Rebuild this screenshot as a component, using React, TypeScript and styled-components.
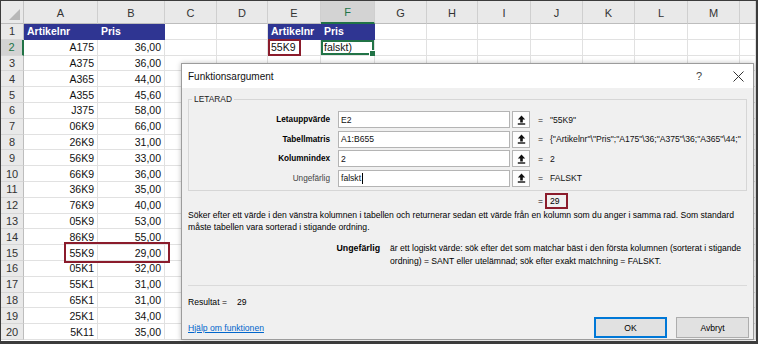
import React from 'react';
import styled, { createGlobalStyle, css } from 'styled-components';

const GlobalStyle = createGlobalStyle`
  html, body { margin: 0; padding: 0; background: #fff; }
  body { width: 758px; height: 344px; overflow: hidden; }
  * { box-sizing: border-box; }
`;

const COLS = [23, 74, 67, 52, 51, 53, 54, 52, 51, 53, 52, 52, 53, 52];
const LETTERS = ['A', 'B', 'C', 'D', 'E', 'F', 'G', 'H', 'I', 'J', 'K', 'L', 'M'];

const Frame = styled.div`
  position: relative;
  width: 758px;
  height: 344px;
  border-style: solid;
  border-color: #3c3c3c;
  border-width: 1px 2px 3px 1px;
  overflow: hidden;
  background: #fff;
`;

const Sheet = styled.div`
  display: grid;
  grid-template-columns: ${COLS.map((c) => c + 'px').join(' ')} 1fr;
  grid-template-rows: 23px repeat(20, 15.8px) 1fr;
  height: 100%;
  font-family: 'Liberation Sans', Arial, sans-serif;
  font-size: 10.5px;
  color: #111;
`;

const Corner = styled.div`
  position: relative;
  background: #e9e9e9;
  border-right: 1px solid #c4c4c4;
  border-bottom: 1px solid #bdbdbd;
  &::after {
    content: '';
    position: absolute;
    right: 3px;
    bottom: 3px;
    border-style: solid;
    border-width: 0 0 11px 11px;
    border-color: transparent transparent #b8b8b8 transparent;
  }
`;

const ColHeader = styled.div<{ $active?: boolean }>`
  display: flex;
  align-items: center;
  justify-content: center;
  padding-top: 1px;
  background: #e9e9e9;
  color: #333;
  font-size: 11px;
  border-right: 1px solid #cfcfcf;
  border-bottom: 1px solid #bdbdbd;
  ${(p) =>
    p.$active &&
    css`
      background: #d3d3d3;
      color: #217346;
      border-bottom: 2px solid #217346;
    `}
`;

const RowHeader = styled.div<{ $active?: boolean }>`
  display: flex;
  align-items: center;
  justify-content: center;
  background: #e9e9e9;
  color: #333;
  font-size: 11px;
  border-right: 1px solid #bdbdbd;
  border-bottom: 1px solid #d6d6d6;
  ${(p) =>
    p.$active &&
    css`
      background: #d3d3d3;
      color: #217346;
      border-right: 2px solid #217346;
    `}
`;

const Cell = styled.div<{ $align?: 'left' | 'right'; $head?: boolean; $selected?: boolean }>`
  position: relative;
  display: flex;
  align-items: center;
  justify-content: ${(p) => (p.$align === 'right' ? 'flex-end' : 'flex-start')};
  padding: 0 3px;
  border-right: 1px solid #e1e1e1;
  border-bottom: 1px solid #e1e1e1;
  white-space: nowrap;
  overflow: visible;
  ${(p) =>
    p.$head &&
    css`
      background: #2f3592;
      color: #fff;
      font-weight: bold;
      border-right-color: #2f3592;
      border-bottom-color: #2f3592;
    `}
  ${(p) =>
    p.$selected &&
    css`
      box-shadow: inset 0 0 0 2px #217346;
      &::after {
        content: '';
        position: absolute;
        right: -2px;
        bottom: -2px;
        width: 5px;
        height: 5px;
        background: #217346;
        border: 1px solid #fff;
      }
    `}
`;

const Marked = styled.span`
  border: 2px solid #8b1c2c;
  padding: 0 3px 0 1px;
  margin-left: -3px;
  line-height: 13px;
`;

const RowMark = styled.div`
  position: absolute;
  left: 63px;
  top: 241px;
  width: 106px;
  height: 21px;
  border: 2px solid #8b1c2c;
  pointer-events: none;
`;

/* ---------- dialog ---------- */

const Dialog = styled.div`
  position: absolute;
  left: 180px;
  top: 62px;
  width: 573px;
  height: 277px;
  border: 1px solid #9c9c9c;
  background: #f0f0f0;
  box-shadow: 0 0 5px rgba(0, 0, 0, 0.25);
  display: flex;
  flex-direction: column;
  font-family: 'Liberation Sans', Arial, sans-serif;
  font-size: 8.6px;
  color: #000;
`;

const TitleBar = styled.div`
  height: 24px;
  flex: none;
  background: #fff;
  display: flex;
  align-items: center;
  padding: 0 8px 0 6px;
  font-size: 10px;
  color: #111;
`;

const TitleText = styled.span`
  flex: 1;
`;

const HelpGlyph = styled.span`
  width: 10px;
  text-align: center;
  font-size: 11px;
  color: #444;
  margin-right: 27px;
`;

const CloseButton = styled.span`
  display: flex;
  width: 14px;
  justify-content: center;
`;

const Body = styled.div`
  flex: 1;
  display: flex;
  flex-direction: column;
  padding: 0 6px;
`;

const GroupBox = styled.div`
  position: relative;
  margin-top: 11px;
  height: 92px;
  border: 1px solid #d6d6d6;
  padding-top: 11px;
  display: flex;
  flex-direction: column;
  gap: 2.5px;
`;

const Legend = styled.span`
  position: absolute;
  top: -6px;
  left: 3px;
  padding: 0 2px;
  background: #f0f0f0;
  color: #222;
  font-size: 8.4px;
  line-height: 11px;
`;

const ArgRow = styled.div`
  display: flex;
  align-items: center;
  height: 17px;
`;

const ArgLabel = styled.span<{ $bold?: boolean }>`
  width: 141px;
  margin-right: 8px;
  text-align: right;
  font-size: 8.2px;
  font-weight: ${(p) => (p.$bold ? 'bold' : 'normal')};
  color: ${(p) => (p.$bold ? '#000' : '#444')};
`;

const ArgInput = styled.div`
  width: 172px;
  height: 17px;
  background: #fff;
  border: 1px solid #b4b4b4;
  display: flex;
  align-items: center;
  padding-left: 2px;
  color: #111;
`;

const Caret = styled.span`
  display: inline-block;
  width: 1px;
  height: 11px;
  background: #000;
  margin-left: 0.5px;
`;

const RefButton = styled.div`
  width: 18px;
  height: 17px;
  margin-left: 2px;
  background: #fdfdfd;
  border: 1px solid #b4b4b4;
  display: flex;
  align-items: center;
  justify-content: center;
`;

const Equals = styled.span`
  margin-left: 8px;
  width: 6px;
  color: #222;
`;

const ArgValue = styled.span`
  margin-left: 6px;
  white-space: nowrap;
  color: #111;
`;

const PreviewRow = styled.div`
  display: flex;
  align-items: center;
  height: 16px;
  margin-top: 2px;
  padding-left: 350px;
`;

const PreviewBox = styled.span`
  margin-left: 2px;
  width: 23px;
  height: 16px;
  border: 2px solid #8b1c2c;
  display: flex;
  align-items: center;
  padding-left: 3px;
`;

const Description = styled.p`
  margin: 0;
  line-height: 12px;
  white-space: nowrap;
`;

const ArgHelp = styled.div`
  margin-top: 9px;
  display: grid;
  grid-template-columns: 192px 1fr;
  column-gap: 10px;
  line-height: 13px;
`;

const ArgHelpName = styled.span`
  text-align: right;
  font-weight: bold;
  font-size: 8.8px;
`;

const ArgHelpText = styled.span`
  font-size: 8.6px;
`;

const Separator = styled.div`
  margin-top: 17px;
  height: 1px;
  background: #dadada;
`;

const ResultLine = styled.div`
  margin-top: 10px;
  line-height: 12px;
  display: flex;
`;

const ResultValue = styled.span`
  margin-left: 10px;
`;

const Footer = styled.div`
  margin-top: 9px;
  margin-right: -2px;
  display: flex;
  align-items: center;
  gap: 9px;
`;

const HelpLink = styled.a`
  color: #0066cc;
  text-decoration: underline;
  margin-right: auto;
`;

const Button = styled.button<{ $primary?: boolean }>`
  width: 73px;
  height: 21px;
  font-family: inherit;
  font-size: 8.6px;
  color: #000;
  background: #e1e1e1;
  border: 1px solid #adadad;
  padding: 0;
  ${(p) =>
    p.$primary &&
    css`
      border: 2px solid #0078d7;
    `}
`;

const RefIcon = () => (
  <svg width="9" height="10" viewBox="0 0 9 10">
    <path d="M4.5 0.5 L0.8 4.6 H3.2 V7.4 H5.8 V4.6 H8.2 Z" fill="#111" />
    <rect x="0.8" y="8.3" width="7.4" height="1.4" fill="#111" />
  </svg>
);

const CloseIcon = () => (
  <svg width="11" height="11" viewBox="0 0 11 11">
    <path d="M0.5 0.5 L10.5 10.5 M10.5 0.5 L0.5 10.5" stroke="#333" strokeWidth="1" fill="none" />
  </svg>
);

type CellDef = { text?: React.ReactNode; align?: 'left' | 'right'; head?: boolean; selected?: boolean };

const data: [string, string][] = [
  ['A175', '36,00'],
  ['A375', '36,00'],
  ['A365', '44,00'],
  ['A355', '45,60'],
  ['J375', '58,00'],
  ['06K9', '66,00'],
  ['26K9', '31,00'],
  ['56K9', '33,00'],
  ['66K9', '36,00'],
  ['36K9', '35,00'],
  ['76K9', '40,00'],
  ['05K9', '53,00'],
  ['86K9', '55,00'],
  ['55K9', '29,00'],
  ['05K1', '32,00'],
  ['55K1', '31,00'],
  ['65K1', '31,00'],
  ['25K1', '34,00'],
  ['5K11', '35,00'],
];

function rowCells(r: number): CellDef[] {
  const cells: CellDef[] = Array.from({ length: 14 }, () => ({}));
  if (r === 1) {
    cells[0] = { text: 'Artikelnr', head: true };
    cells[1] = { text: 'Pris', head: true };
    cells[4] = { text: 'Artikelnr', head: true };
    cells[5] = { text: 'Pris', head: true };
  } else {
    const [a, b] = data[r - 2];
    cells[0] = { text: a, align: 'right' };
    cells[1] = { text: b, align: 'right' };
    if (r === 2) {
      cells[4] = { text: <Marked>55K9</Marked> };
      cells[5] = { text: 'falskt)', selected: true };
    }
  }
  return cells;
}

const args = [
  { label: 'Letauppvärde', bold: true, input: 'E2', value: '"55K9"' },
  { label: 'Tabellmatris', bold: true, input: 'A1:B655', value: '{"Artikelnr"\\"Pris";"A175"\\36;"A375"\\36;"A365"\\44;"' },
  { label: 'Kolumnindex', bold: true, input: '2', value: '2' },
  { label: 'Ungefärlig', bold: false, input: 'falskt', value: 'FALSKT', caret: true },
];

export default function App() {
  const rows = Array.from({ length: 20 }, (_, i) => i + 1);
  return (
    <>
      <GlobalStyle />
      <Frame>
        <Sheet>
          <Corner />
          {LETTERS.map((l) => (
            <ColHeader key={l} $active={l === 'F'}>
              {l}
            </ColHeader>
          ))}
          <ColHeader />
          {rows.map((r) => (
            <React.Fragment key={r}>
              <RowHeader $active={r === 2}>{r}</RowHeader>
              {rowCells(r).map((c, i) => (
                <Cell key={i} $align={c.align} $head={c.head} $selected={c.selected}>
                  {c.text}
                </Cell>
              ))}
            </React.Fragment>
          ))}
        </Sheet>
        <RowMark />
        <Dialog>
          <TitleBar>
            <TitleText>Funktionsargument</TitleText>
            <HelpGlyph>?</HelpGlyph>
            <CloseButton>
              <CloseIcon />
            </CloseButton>
          </TitleBar>
          <Body>
            <GroupBox>
              <Legend>LETARAD</Legend>
              {args.map((a) => (
                <ArgRow key={a.label}>
                  <ArgLabel $bold={a.bold}>{a.label}</ArgLabel>
                  <ArgInput>
                    {a.input}
                    {a.caret && <Caret />}
                  </ArgInput>
                  <RefButton>
                    <RefIcon />
                  </RefButton>
                  <Equals>=</Equals>
                  <ArgValue>{a.value}</ArgValue>
                </ArgRow>
              ))}
            </GroupBox>
            <PreviewRow>
              <span>=</span>
              <PreviewBox>29</PreviewBox>
            </PreviewRow>
            <Description>
              Söker efter ett värde i den vänstra kolumnen i tabellen och returnerar sedan ett värde från en kolumn som du anger i samma rad. Som standard
              <br />
              måste tabellen vara sorterad i stigande ordning.
            </Description>
            <ArgHelp>
              <ArgHelpName>Ungefärlig</ArgHelpName>
              <ArgHelpText>
                är ett logiskt värde: sök efter det som matchar bäst i den första kolumnen (sorterat i stigande
                <br />
                ordning) = SANT eller utelämnad; sök efter exakt matchning = FALSKT.
              </ArgHelpText>
            </ArgHelp>
            <Separator />
            <ResultLine>
              <span>Resultat =</span>
              <ResultValue>29</ResultValue>
            </ResultLine>
            <Footer>
              <HelpLink href="#">Hjälp om funktionen</HelpLink>
              <Button $primary>OK</Button>
              <Button>Avbryt</Button>
            </Footer>
          </Body>
        </Dialog>
      </Frame>
    </>
  );
}
